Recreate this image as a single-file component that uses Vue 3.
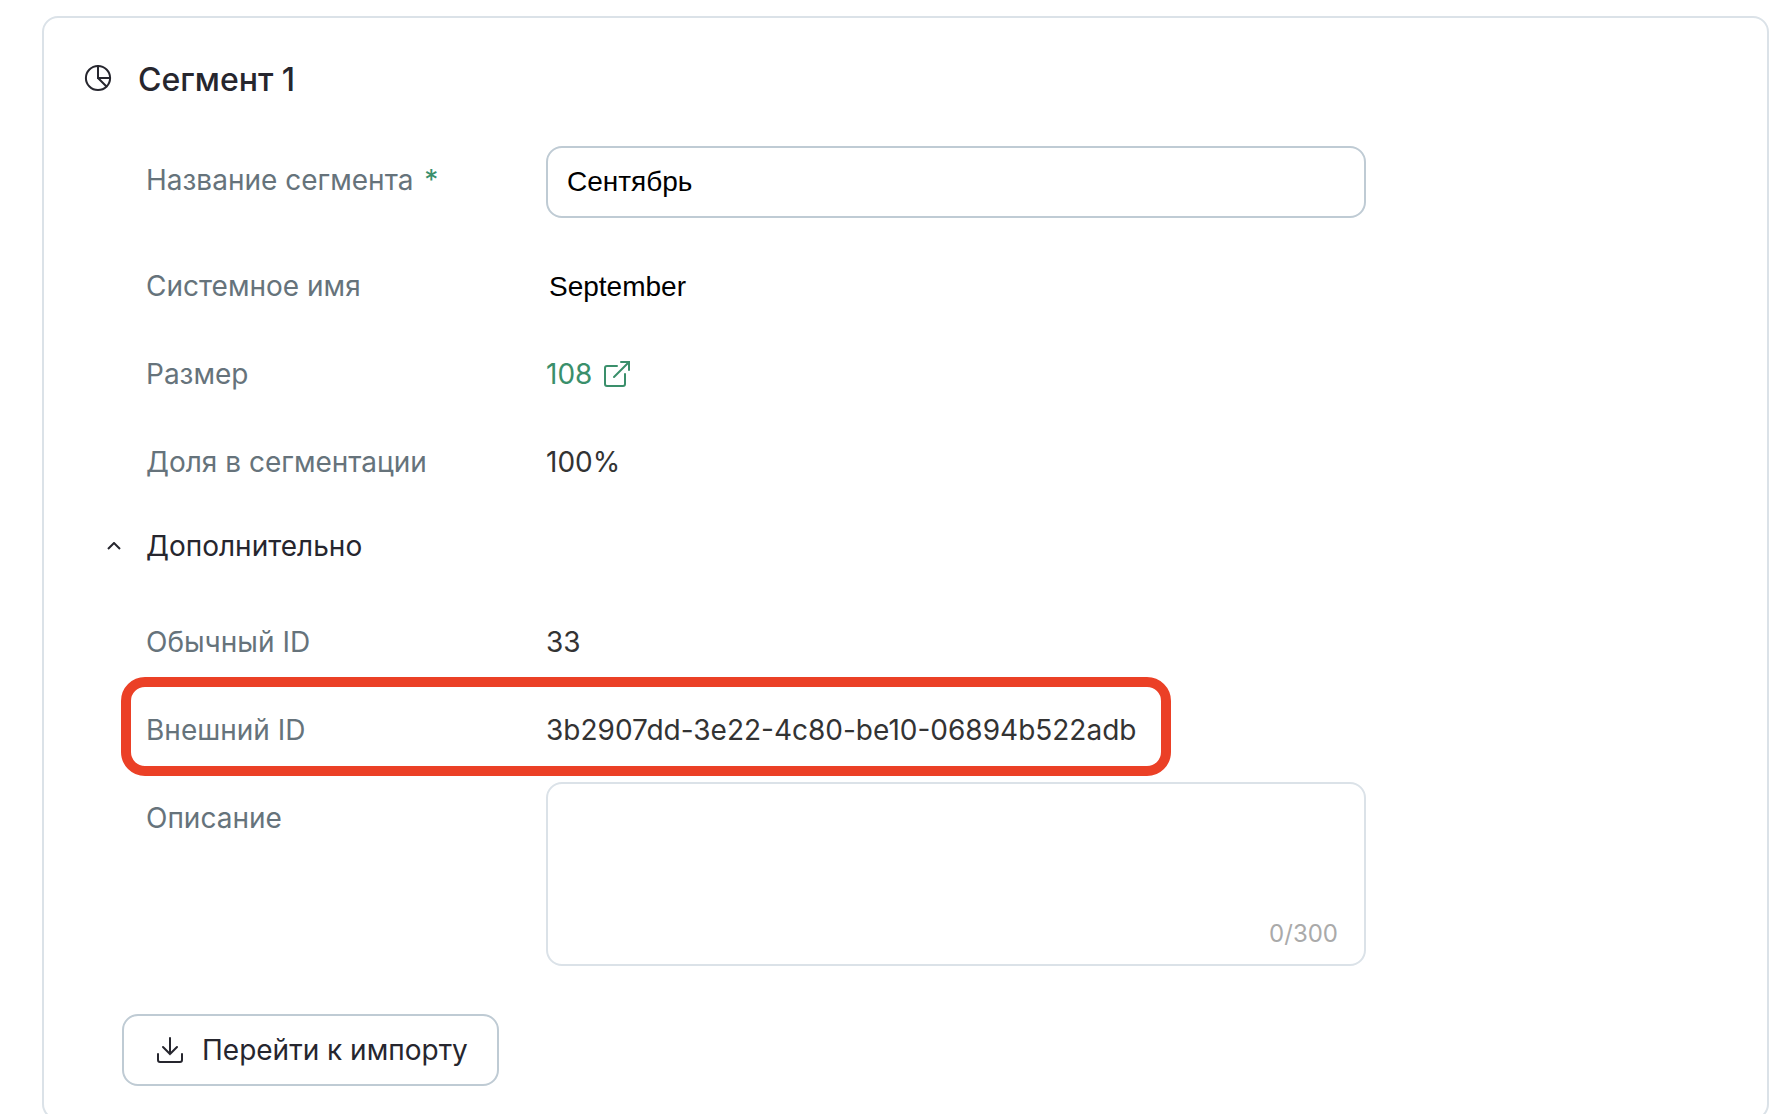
<script setup>
import { ref } from "vue";

const name = ref("Сентябрь");
const description = ref("");
const expanded = ref(true);
const maxLength = 300;
</script>

<template>
  <main class="page">
    <section class="card">
      <header class="card-header">
        <svg class="icon" viewBox="0 0 26 26" aria-hidden="true">
          <circle cx="13" cy="13" r="12.1" />
          <path d="M13 1v12h12M13 13l8.5 8.5" />
        </svg>
        <h1 class="title">Сегмент 1</h1>
      </header>

      <form class="form" @submit.prevent>
        <div class="row">
          <label class="label label-input" for="segment-name">
            Название сегмента <span class="required">*</span>
          </label>
          <input id="segment-name" v-model="name" class="input" type="text" />
        </div>
        <div class="row">
          <span class="label">Системное имя</span>
          <span class="value-system">September</span>
        </div>
        <div class="row">
          <span class="label">Размер</span>
          <a class="link" href="#">
            108
            <svg class="icon" viewBox="0 0 26 26" aria-hidden="true">
              <path d="M13 5H3a2 2 0 0 0-2 2v16a2 2 0 0 0 2 2h16a2 2 0 0 0 2-2V13" />
              <path d="M10 16L25 1M17 1h8v8" />
            </svg>
          </a>
        </div>
        <div class="row">
          <span class="label">Доля в сегментации</span>
          <span>100%</span>
        </div>

        <button
          class="toggle"
          type="button"
          :aria-expanded="expanded"
          @click="expanded = !expanded"
        >
          <svg
            class="chevron"
            :class="{ closed: !expanded }"
            viewBox="0 0 14 8"
            aria-hidden="true"
          >
            <path d="M1 7l6-6 6 6" />
          </svg>
          Дополнительно
        </button>

        <template v-if="expanded">
          <div class="row">
            <span class="label">Обычный ID</span>
            <span>33</span>
          </div>
          <div class="row row-highlight">
            <span class="label">Внешний ID</span>
            <span>3b2907dd-3e22-4c80-be10-06894b522adb</span>
          </div>
          <div class="row">
            <label class="label label-area" for="description">Описание</label>
            <div class="area">
              <textarea
                id="description"
                v-model="description"
                class="textarea"
                :maxlength="maxLength"
              ></textarea>
              <span class="counter">{{ description.length }}/{{ maxLength }}</span>
            </div>
          </div>
        </template>
      </form>

      <button class="import" type="button">
        <svg class="icon" viewBox="0 0 26 26" aria-hidden="true">
          <path d="M13 1v16M6 10l7 7 7-7" />
          <path d="M1 17v6a2 2 0 0 0 2 2h20a2 2 0 0 0 2-2v-6" />
        </svg>
        Перейти к импорту
      </button>
    </section>
  </main>
</template>

<style>
body {
  margin: 0;
  background-color: #fff;
}
</style>

<style scoped>
.page {
  box-sizing: border-box;
  height: calc(100vh - 4px);
  padding: 16px 23px 0 42px;
  overflow: hidden;
  font-family: Inter, "Liberation Sans", sans-serif;
  font-size: 28px;
  line-height: 40px;
  color: #333;
}

.card {
  padding: 42px 40px 32px;
  border: 2px solid #dbe2e8;
  border-radius: 16px;
}

.card-header {
  display: flex;
  align-items: baseline;
  gap: 27px;
  margin-bottom: 46px;
  padding-left: 1px;
  color: #26262e;
}

.title {
  margin: 0;
  font-size: 32px;
  font-weight: 500;
}

.icon {
  flex: none;
  width: 26px;
  height: 26px;
  overflow: visible;
  fill: none;
  stroke: currentColor;
  stroke-width: 2;
  stroke-linecap: round;
}

.form {
  padding-left: 62px;
}

.row {
  position: relative;
  display: grid;
  grid-template-columns: 400px minmax(0, 820px);
  margin-bottom: 48px;
}

.label {
  color: #66737b;
}

.label-input {
  padding-top: 14px;
}

.label-area {
  padding-top: 16px;
}

.required {
  margin-left: 3px;
  color: #3a8f6b;
}

.input,
.textarea {
  box-sizing: border-box;
  display: block;
  width: 100%;
  padding: 0 19px;
  border: 2px solid #bfcbd4;
  border-radius: 16px;
  background-color: #fff;
  font-family: "Liberation Sans", Arial, sans-serif;
  font-size: 28px;
  color: #000;
  outline: none;
}

.input {
  height: 72px;
}

.value-system {
  padding: 2px 0 0 3px;
  font-family: "Liberation Sans", Arial, sans-serif;
  line-height: 38px;
  color: #000;
}

.link {
  display: flex;
  align-items: center;
  gap: 12px;
  color: #3a8f6b;
  text-decoration: none;
}

.toggle {
  display: flex;
  align-items: center;
  gap: 25px;
  margin: -4px 0 56px -39px;
  padding: 0;
  border: none;
  background: none;
  font: inherit;
  color: #26262e;
  cursor: pointer;
}

.chevron {
  width: 14px;
  height: 8px;
  fill: none;
  stroke: currentColor;
  stroke-width: 2;
}

.chevron.closed {
  transform: rotate(180deg);
}

.row-highlight {
  margin-bottom: 32px;
}

/* Red frame around the external ID */
.row-highlight::after {
  content: "";
  position: absolute;
  top: -33px;
  left: -25px;
  box-sizing: border-box;
  width: 1050px;
  height: 99px;
  border: 10px solid #eb4026;
  border-radius: 24px;
  pointer-events: none;
}

.area {
  position: relative;
}

.textarea {
  height: 184px;
  padding: 14px 19px;
  border-color: #dbe2e8;
  resize: none;
}

.counter {
  position: absolute;
  right: 28px;
  bottom: 12px;
  font-size: 24px;
  color: #aaa;
}

.import {
  display: flex;
  align-items: center;
  gap: 19px;
  height: 72px;
  margin-left: 38px;
  padding: 0 29px 0 33px;
  border: 2px solid #bfcbd4;
  border-radius: 16px;
  background-color: #fff;
  font: inherit;
  color: #26262e;
  cursor: pointer;
}
</style>
